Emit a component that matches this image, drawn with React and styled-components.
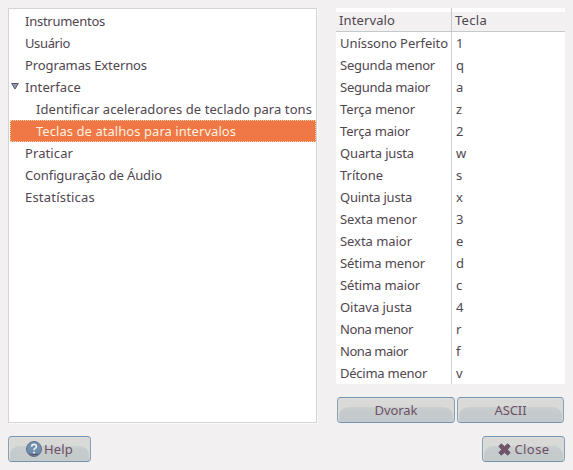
import React, { useLayoutEffect, useRef } from "react";
import styled, { createGlobalStyle, css } from "styled-components";

const GlobalStyle = createGlobalStyle`
  * { box-sizing: border-box; }
  body {
    margin: 0;
    background: #f2f0f1;
    color: #50464f;
    font: 13px/22px "Noto Sans", "Open Sans", sans-serif;
  }
`;

const Window = styled.main`
  width: 573px;
  height: 470px;
  padding: 8px;
  display: flex;
  flex-direction: column;
  gap: 13px;
  overflow: hidden;
  background: #f2f0f1;
`;

const Content = styled.div`
  display: flex;
  justify-content: space-between;
  height: 415px;
`;

const Tree = styled.ul`
  width: 309px;
  height: 415px;
  margin: 0;
  padding: 1px 0 0 1px;
  list-style: none;
  background: #fff;
  border: 1px solid #d5d4d5;
  box-shadow: 1px 1px 0 #faf9fa;
`;

const TreeRow = styled.li`
  position: relative;
  display: flex;
  align-items: center;
  height: 22px;
  padding-left: ${({ $level }) => ($level ? 26 : 15)}px;
  ${({ $selected }) =>
    $selected &&
    css`
      background: #f07746;
      outline: 1px dotted #fbd0a6;
      outline-offset: -1px;
      color: #fff1df;
    `}
`;

const Expander = styled.svg`
  position: absolute;
  left: 1px;
  top: 7px;
  width: 8px;
  height: 7px;
`;

const Side = styled.section`
  width: 229px;
  display: flex;
  flex-direction: column;
  justify-content: space-between;
`;

const Table = styled.div`
  background: #fff;
`;

const Row = styled.div`
  display: grid;
  grid-template-columns: 116px 1fr;
  height: 22px;
`;

const Head = styled(Row)`
  height: 24px;
  border-top: 4px solid #fff;
  border-bottom: 1px solid #c4c9cb;
  background: #f2f0f1;
`;

const Cell = styled.div`
  display: flex;
  align-items: center;
  padding-left: ${({ $head }) => ($head ? 3 : 4)}px;
  border-right: ${({ $line }) => ($line ? "1px solid #d0d3d5" : "0")};
`;

const HeadCell = styled(Cell)`
  height: 23px;
  margin-top: -4px;
  padding-top: 1px;
  border-right-color: #c4c9cb;
`;

const KeyButtons = styled.div`
  display: grid;
  grid-template-columns: 118px 107px;
  gap: 2px;
  padding: 0 1px;
`;

const Button = styled.button`
  position: relative;
  isolation: isolate;
  overflow: hidden;
  display: flex;
  align-items: center;
  justify-content: center;
  gap: ${({ $gap }) => $gap || 0}px;
  width: ${({ $width }) => ($width ? `${$width}px` : "auto")};
  height: 26px;
  padding: 0;
  border: 1px solid #88a0b4;
  border-top-color: #7294b2;
  border-bottom-color: #7590a7;
  border-radius: 4px;
  background: #d9dad8;
  box-shadow: inset 0 1px #e1e2df, inset 1px 0 #dfe0de, inset -1px 0 #d5d9d9;
  color: #6d5065;
  font: inherit;

  &::before {
    content: "";
    position: absolute;
    z-index: -1;
    inset: 9px 1px 0;
    border-radius: 9px 9px 2px 2px;
    background: linear-gradient(#cacfcf, #c5cacc 5px);
  }
`;

const Footer = styled.footer`
  display: flex;
  justify-content: space-between;
`;

const Text = styled.span`
  display: block;
  white-space: pre;
`;

/* Spreads the letters so that a label takes up exactly the given width. */
function Label({ width, children }) {
  const ref = useRef(null);
  useLayoutEffect(() => {
    const el = ref.current;
    el.style.letterSpacing = "0px";
    const natural = el.getBoundingClientRect().width;
    const spacing = (width - natural) / children.length;
    el.style.letterSpacing = `${spacing}px`;
  }, [width, children]);
  return <Text ref={ref}>{children}</Text>;
}

const HelpIcon = () => (
  <svg width="16" height="16" viewBox="0 0 16 16">
    <circle cx="8" cy="8" r="7.5" fill="#7090ae" stroke="#63718d" />
    <path d="M1.5 11.5Q8 17.5 14.5 11.5Q8 14.5 1.5 11.5" fill="#59506c" />
    <path d="M5.6 5.7Q5.7 3.4 8 3.4Q10.4 3.4 10.4 5.5Q10.4 6.7 9 7.4Q8 8 8 9.3" fill="none" stroke="#edf1ed" strokeWidth="1.6" />
    <rect x="7.1" y="10.7" width="1.8" height="1.8" fill="#edf1ed" />
  </svg>
);

const CloseIcon = () => (
  <svg width="13" height="13" viewBox="0 0 13 13">
    <path
      d="M3.2 .8L6.5 3.5L9.8 .8L12.2 3.2L9.5 6.5L12.2 9.8L9.8 12.2L6.5 9.5L3.2 12.2L.8 9.8L3.5 6.5L.8 3.2Z"
      fill="#755168"
      stroke="#67627d"
      strokeWidth="1"
      strokeLinejoin="round"
    />
  </svg>
);

const tree = [
  ["Instrumentos", 80],
  ["Usuário", 45],
  ["Programas Externos", 122],
  ["Interface", 56],
  ["Identificar aceleradores de teclado para tons", 276, 1],
  ["Teclas de atalhos para intervalos", 200, 1],
  ["Praticar", 48],
  ["Configuração de Áudio", 137],
  ["Estatísticas", 70],
];

const intervals = [
  ["Uníssono Perfeito", 108, "1"],
  ["Segunda menor", 95, "q"],
  ["Segunda maior", 90, "a"],
  ["Terça menor", 75, "z"],
  ["Terça maior", 70, "2"],
  ["Quarta justa", 74, "w"],
  ["Trítone", 43, "s"],
  ["Quinta justa", 72, "x"],
  ["Sexta menor", 77, "3"],
  ["Sexta maior", 72, "e"],
  ["Sétima menor", 85, "d"],
  ["Sétima maior", 80, "c"],
  ["Oitava justa", 72, "4"],
  ["Nona menor", 73, "r"],
  ["Nona maior", 68, "f"],
  ["Décima menor", 87, "v"],
];

export default function App() {
  return (
    <>
      <GlobalStyle />
      <Window>
        <Content>
          <Tree>
            {tree.map(([name, width, level], i) => (
              <TreeRow key={name} $level={level} $selected={i === 5}>
                {i === 3 && (
                  <Expander viewBox="0 0 8 7">
                    <path d="M.7 .5H7.3L4 6Z" fill="#8ea0b3" stroke="#5c5268" />
                  </Expander>
                )}
                <Label width={width}>{name}</Label>
              </TreeRow>
            ))}
          </Tree>
          <Side>
            <Table>
              <Head>
                <HeadCell $head $line><Label width={56}>Intervalo</Label></HeadCell>
                <HeadCell $head><Label width={32}>Tecla</Label></HeadCell>
              </Head>
              {intervals.map(([name, width, key]) => (
                <Row key={name}>
                  <Cell $line><Label width={width}>{name}</Label></Cell>
                  <Cell>{key}</Cell>
                </Row>
              ))}
            </Table>
            <KeyButtons>
              <Button><Label width={43}>Dvorak</Label></Button>
              <Button><Label width={32}>ASCII</Label></Button>
            </KeyButtons>
          </Side>
        </Content>
        <Footer>
          <Button $width={83} $gap={2}><HelpIcon /><Label width={29}>Help</Label></Button>
          <Button $width={83} $gap={4}><CloseIcon /><Label width={35}>Close</Label></Button>
        </Footer>
      </Window>
    </>
  );
}
